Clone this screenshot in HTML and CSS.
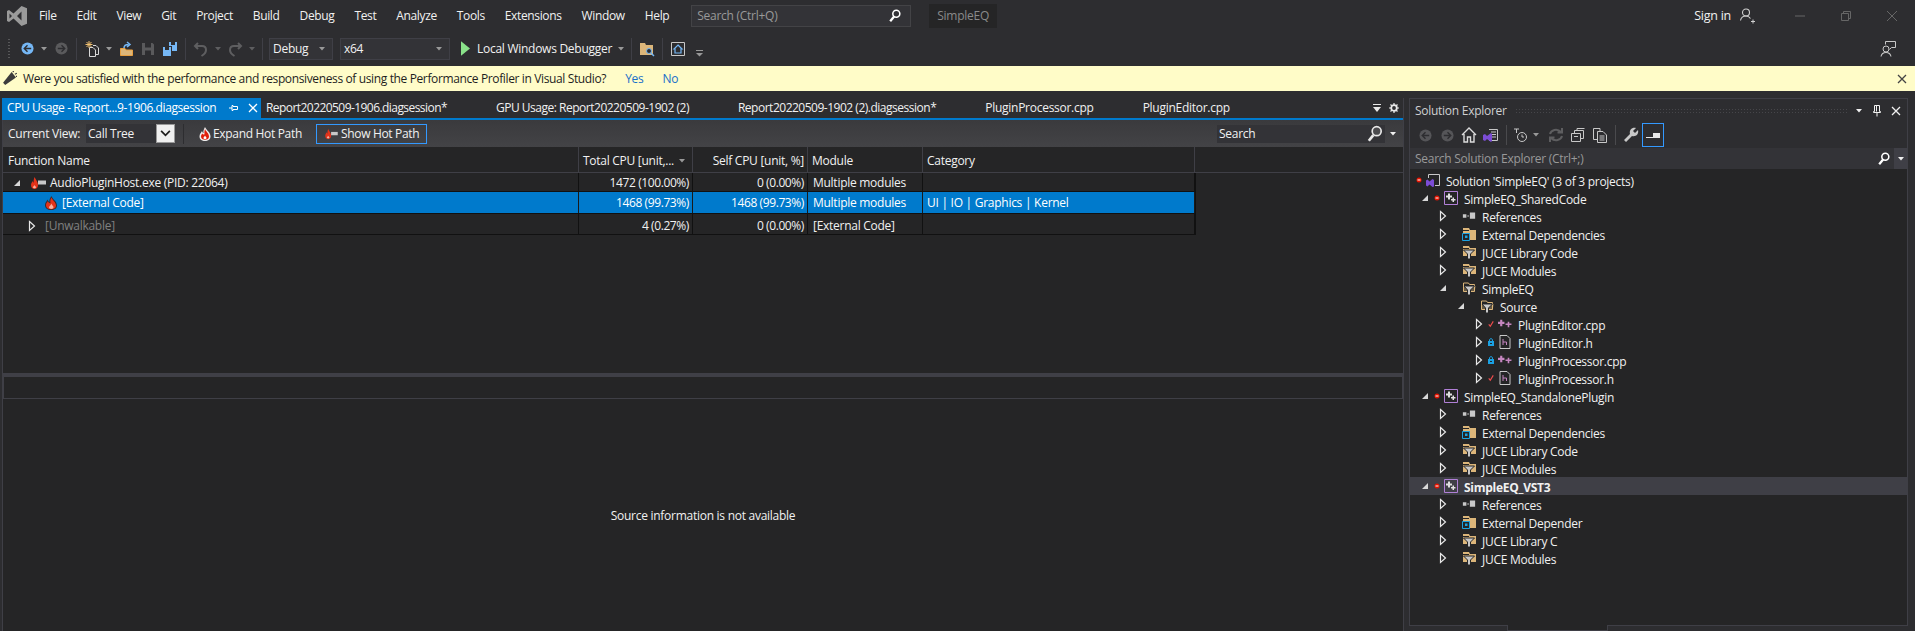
FILE: index.html
```html
<!DOCTYPE html>
<html lang="en">
<head>
<meta charset="utf-8">
<title>SimpleEQ - Visual Studio</title>
<link rel="stylesheet" href="styles.css">
</head>
<body>
<svg class="defs" aria-hidden="true">
  <symbol id="i-tri-open" viewBox="0 0 8 8"><path d="M7 1V7H1Z" fill="#d8d8d8"/></symbol>
  <symbol id="i-tri-closed" viewBox="0 0 8 12"><path d="M1.5 1.5L6.5 6L1.5 10.5Z" fill="none" stroke="#e8e8e8" stroke-width="1.2"/></symbol>
  <symbol id="i-dd" viewBox="0 0 8 4"><path d="M1 0H7L4 3.500Z" fill="currentColor"/></symbol>
  <symbol id="i-ref" viewBox="0 0 16 10"><path d="M1 3H5V7H1ZM9 1H15V8H9ZM6 4.500H8V5.500H6Z" fill="#c8c8c8"/></symbol>
  <symbol id="i-dep" viewBox="0 0 14 14"><path d="M1 1H7L8 3H14V13H1Z" fill="#dcb67a"/><path d="M1 3H7V4H1Z" fill="#252526"/><path d="M0.500 6.500H7.500V13.500H0.500Z" fill="#252526" stroke="#1ba1e2"/><path d="M3 8.500H5.500V11H3ZM4 9.500H4.500V10H4Z" fill="#1ba1e2"/></symbol>
  <symbol id="i-filter" viewBox="0 0 14 14"><path d="M1 1H7L8 3H14V11H1Z" fill="#dcb67a"/><path d="M1 3H7V4H1Z" fill="#252526"/><path d="M1.500 5H12.500L8.500 9V14H5.500V9Z" fill="#c8c8c8" stroke="#252526"/></symbol>
  <symbol id="i-filter-open" viewBox="0 0 14 14"><path d="M1.500 2H6.500L7.500 3.500H12.500V10.500H1.500Z" fill="none" stroke="#dcb67a"/><path d="M1 5H14L12.500 11H2Z" fill="#dcb67a" opacity=".35"/><path d="M2 5H12.500L8.500 9V14H5.500V9Z" fill="#c8c8c8" stroke="#252526"/></symbol>
  <symbol id="i-proj" viewBox="0 0 14 14"><path d="M.5.5H13.500V13.500H.5Z" fill="none" stroke="#b180d7"/><path d="M4 2.500H6V4.500H8V6.500H6V8.500H4V6.500H2V4.500H4ZM8.500 6.500H10V8H11.500V9.500H10V11H8.500V9.500H7V8H8.500Z" fill="#e0e0e0"/></symbol>
  <symbol id="i-cpp" viewBox="0 0 13 8"><path d="M2 0H4V2H6V4H4V6H2V4H0V2H2ZM9 2H10.500V3.500H12.500V5H10.500V7H9V5H7V3.500H9Z" fill="#c586c0"/></symbol>
  <symbol id="i-h" viewBox="0 0 11 14"><path d="M.5.5H7.500L10.500 3.500V13.500H.5Z" fill="none" stroke="#c8c8c8"/><path d="M3.500 4V10M3.500 7H7V10" fill="none" stroke="#c586c0"/></symbol>
  <symbol id="i-check" viewBox="0 0 8 8"><path d="M1 4.500L3 7L7 .5" fill="none" stroke="#f14c4c" stroke-width="1.500"/></symbol>
  <symbol id="i-lock" viewBox="0 0 6 8"><path d="M0 3H6V8H0Z" fill="#1ba1e2"/><path d="M1.500 3V1.500C1.500.5 4.500.5 4.500 1.500V3" fill="none" stroke="#1ba1e2"/><path d="M2 5H4V6H2Z" fill="#252526"/></symbol>
  <symbol id="i-minus" viewBox="0 0 6 6"><circle cx="3" cy="3" r="2.500" fill="#e51400"/><path d="M1.500 2.500H4.500V3.500H1.500Z" fill="#fff"/></symbol>
  <symbol id="i-nav-back" viewBox="0 0 14 14"><circle cx="7" cy="7" r="6.500" fill="currentColor"/><path d="M7 3.500L3.500 7L7 10.500M3.500 7H11" fill="none" stroke="#2d2d30" stroke-width="1.500"/></symbol>
  <symbol id="i-nav-fwd" viewBox="0 0 14 14"><circle cx="7" cy="7" r="6.500" fill="currentColor"/><path d="M7 3.500L10.500 7L7 10.500M10.500 7H3" fill="none" stroke="#2d2d30" stroke-width="1.500"/></symbol>
  <symbol id="i-flame" viewBox="0 0 12 14"><path d="M6.500 0C7 3 12 5 12 9.500C12 12.500 9.500 14 6 14C2.500 14 0 12.500 0 9C0 7 1.500 5.500 2.500 3.500C3 5 3.500 5.500 4.500 6C4 4 5 2 6.500 0Z" fill="#3a2a2a"/><path d="M6.500 1.500C7 4 11 6 11 9.500C11 12 9 13.300 6 13.300C3 13.300 1 12 1 9.200C1 7.500 2 6.500 2.800 5.200C3.300 6.300 4 7 5.500 7.300C5 5 5.500 3 6.500 1.500Z" fill="#e5331a"/><path d="M6.500 7.500C6.500 9 8.500 10 8.500 11.300C8.500 12.500 7.500 13 6.300 13C5 13 4 12.500 4 11.300C4 10 5.800 9.500 6.500 7.500Z" fill="#f6b0a0"/></symbol>
  <symbol id="i-flame-white" viewBox="0 0 12 14"><path d="M6 0C7 3 11.500 5 11.500 9.500C11.500 12.500 9 14 6 14C3 14 .5 12.500 .5 9.500C.5 7 2 6 3 4C3.500 5.500 4 6 4.500 6C4 4 5 2 6 0Z" fill="#eee"/><path d="M6 2C6.800 4.500 10 6 10 9.500C10 11.800 8 12.800 6 12.800C4 12.800 2 11.800 2 9.500C2 8 3 7.300 3.200 6.500C4 7.800 5.500 7.800 5.500 7C5.300 5 5.500 3.500 6 2Z" fill="#e0200c"/><path d="M6 8.500C6.300 9.500 7.500 10 7.500 11C7.500 11.800 6.800 12 6 12C5.200 12 4.500 11.800 4.500 11C4.500 10 5.700 9.500 6 8.500Z" fill="#fff"/></symbol>
  <symbol id="i-hot" viewBox="0 0 15 12"><path d="M3.500 0C4.500 2.500 7 4.500 7 8C7 10.500 5.500 12 3.500 12C1.500 12 0 10.500 0 8C0 6.500 1 5.500 1.500 4C2 5 2.300 5.500 2.700 5.500C2.500 4 2.800 2 3.500 0Z" fill="#e5331a"/><path d="M3.500 8C4 9 5 9.300 5 10.300C5 11 4.300 11.300 3.500 11.300C2.700 11.300 2 11 2 10.300C2 9.300 3 9 3.500 8Z" fill="#f6b0a0"/><path d="M7 3.500H15V7.500H7Z" fill="#c8c8c8"/></symbol>
  <symbol id="i-search" viewBox="0 0 14 16"><circle cx="8.500" cy="5.500" r="4" fill="none" stroke="#fff" stroke-width="1.800"/><path d="M6 8.500L1.500 14" stroke="#fff" stroke-width="2.600"/></symbol>
  <symbol id="i-x" viewBox="0 0 10 10"><path d="M1 1L9 9M9 1L1 9" fill="none" stroke="currentColor" stroke-width="1.300"/></symbol>
</svg>

<div class="app">
  <header class="titlebar">
    <svg class="logo" viewBox="0 0 20 20"><path fill-rule="evenodd" d="M14.500 0L20 2.200V17.800L14.500 20L6.500 12.500L2 16L0 15V5L2 4L6.500 7.500ZM14.500 5.500L10 10L14.500 14.500ZM2.500 7.500V12.500L5 10Z" fill="#9a9a9a"/></svg>
    <nav class="menu">
      <span>File</span><span>Edit</span><span>View</span><span>Git</span><span>Project</span><span>Build</span><span>Debug</span><span>Test</span><span>Analyze</span><span>Tools</span><span>Extensions</span><span>Window</span><span>Help</span>
    </nav>
    <div class="quick"><span>Search (Ctrl+Q)</span><svg class="i14" viewBox="0 0 14 16"><use href="#i-search"/></svg></div>
    <div class="solname">SimpleEQ</div>
    <div class="spacer"></div>
    <span class="signin">Sign in</span>
    <svg class="person" viewBox="0 0 16 16"><circle cx="6" cy="4.500" r="3.500" fill="none" stroke="#d0d0d0" stroke-width="1.100"/><path d="M.5 12.500C1 9.500 3 8 6 8C8 8 9.500 9 10.500 10.500" fill="none" stroke="#d0d0d0" stroke-width="1.100"/><path d="M11 13.500H15M13 11.500V15.500" stroke="#d0d0d0"/></svg>
    <div class="winbtns">
      <svg class="win" viewBox="0 0 12 12"><path d="M1 6H11" stroke="#666" stroke-width="1"/></svg>
      <svg class="win" viewBox="0 0 12 12"><path d="M1.500 3.500H8.500V10.500H1.500ZM3.500 3.500V1.500H10.500V8.500H8.500" fill="none" stroke="#666"/></svg>
      <svg class="win" viewBox="0 0 12 12"><path d="M1 1L11 11M11 1L1 11" stroke="#666"/></svg>
    </div>
  </header>

  <div class="toolbar">
    <span class="grip"></span>
    <span class="btn blue"><svg class="i13"><use href="#i-nav-back"/></svg></span><span class="dd"><svg class="i8"><use href="#i-dd"/></svg></span>
    <span class="btn dim"><svg class="i13"><use href="#i-nav-fwd"/></svg></span>
    <span class="sep"></span>
    <span class="btn"><svg class="i16" viewBox="0 0 16 16"><path d="M5.500 6.500H9L11.500 9V15.500H5.500Z" fill="none" stroke="#d8d8d8"/><path d="M9 4.500H12L14.500 7V13.500H11.500" fill="none" stroke="#d8d8d8"/><path d="M5 0V7M1.500 3.500H8.500M2.500 1L7.500 6M7.500 1L2.500 6" stroke="#f0c070"/></svg></span><span class="dd"><svg class="i8"><use href="#i-dd"/></svg></span>
    <span class="btn"><svg class="i16" viewBox="0 0 16 16"><path d="M2.500 7.500H7L8 9H14.500V14.500H2.500Z" fill="#dcb67a" stroke="#e8a040"/><path d="M6 7C6 4.500 8 3.500 10.500 3.500M9 1L12 3.500L9 6" fill="none" stroke="#75b7f5" stroke-width="1.500"/></svg></span>
    <span class="btn"><svg class="i16" viewBox="0 0 16 16"><path fill-rule="evenodd" d="M2 2H12.500L14 3.500V14H2ZM5 2V6.500H11V2ZM5 9.500V14H11V9.500Z" fill="#5a5a5c"/></svg></span>
    <span class="btn"><svg class="i16" viewBox="0 0 16 16"><path fill-rule="evenodd" d="M1 6H9V15H1ZM3 6V9H7V6Z" fill="#75b7f5"/><path fill-rule="evenodd" d="M7 1H15V10H10V5H7ZM9 1V4H13V1Z" fill="#75b7f5"/></svg></span>
    <span class="sep"></span>
    <span class="btn"><svg class="i16" viewBox="0 0 16 16"><path d="M5 2L2 5L5 8M2.500 5H9C12 5 13 7 13 9C13 11.500 11 13.500 8.500 15" fill="none" stroke="#5e5e60" stroke-width="2"/></svg></span><span class="dd dark"><svg class="i8"><use href="#i-dd"/></svg></span>
    <span class="btn"><svg class="i16" viewBox="0 0 16 16"><path d="M11 2L14 5L11 8M13.500 5H7C4 5 3 7 3 9C3 11.500 5 13.500 7.500 15" fill="none" stroke="#5e5e60" stroke-width="2"/></svg></span><span class="dd dark"><svg class="i8"><use href="#i-dd"/></svg></span>
    <span class="sep"></span>
    <div class="combo debug"><span>Debug</span><svg class="i8"><use href="#i-dd"/></svg></div>
    <div class="combo x64"><span>x64</span><svg class="i8"><use href="#i-dd"/></svg></div>
    <svg class="play" viewBox="0 0 10 16"><path d="M0 0L10 8L0 16Z" fill="#8ae28a"/></svg>
    <span class="runlabel">Local Windows Debugger</span>
    <span class="dd"><svg class="i8"><use href="#i-dd"/></svg></span>
    <span class="sep"></span>
    <span class="btn"><svg class="i16" viewBox="0 0 16 16"><path d="M1 2H6L7 4H14V14H1Z" fill="#dcb67a"/><circle cx="10" cy="10" r="2.500" fill="#2d2d30" stroke="#75b7f5"/><path d="M12 12L15 15" stroke="#75b7f5" stroke-width="1.500"/></svg></span>
    <span class="sep"></span>
    <span class="btn"><svg class="i16" viewBox="0 0 16 16"><path d="M1.500 1.500H14.500V14.500H1.500Z" fill="none" stroke="#c8c8c8"/><path d="M8 4L12 8H11V12H5V8H4Z" fill="none" stroke="#75b7f5" stroke-width="1.200"/></svg></span>
    <svg class="customize" viewBox="0 0 7 7"><path d="M0 .5H7" stroke="#999"/><path d="M0 3H7L3.500 6.500Z" fill="#999"/></svg>
    <div class="spacer"></div>
    <svg class="feedback" viewBox="0 0 16 16"><circle cx="6" cy="8" r="3" fill="none" stroke="#c8c8c8"/><path d="M1 15.500C1.500 13 3 11.500 6 11.500C9 11.500 10.500 13 11 15.500" fill="none" stroke="#c8c8c8" stroke-width="1.100"/><path d="M5.500 3.500V.5H15.500V6.500H11.500L9.500 8.500" fill="none" stroke="#c8c8c8"/></svg>
  </div>

  <div class="infobar">
    <svg class="megaphone" viewBox="0 0 14 14"><path d="M1 11L9 1L13 6L3 13Z" fill="#3c3c3c"/><path d="M10 1L11 0M12 3L14 2M13 5L14 5" stroke="#3c3c3c"/></svg>
    <span class="question">Were you satisfied with the performance and responsiveness of using the Performance Profiler in Visual Studio?</span>
    <a class="link yes">Yes</a>
    <a class="link no">No</a>
    <div class="spacer"></div>
    <svg class="infox" viewBox="0 0 10 10"><use href="#i-x"/></svg>
  </div>

  <main class="workspace">
    <section class="doc">
      <div class="tabs">
        <div class="tab-active">
          <span class="tab-title">CPU Usage - Report...9-1906.diagsession</span>
          <svg class="tabpin" viewBox="0 0 10 8"><path d="M0 4H3M3 1.500V6.500H4V5.500H8.500V2.500H4V1.500Z" fill="none" stroke="#fff"/></svg>
          <svg class="tabx" viewBox="0 0 10 10"><use href="#i-x"/></svg>
        </div>
        <div class="tab-rest">
          <span class="tighter">Report20220509-1906.diagsession*</span>
          <span class="tight">GPU Usage: Report20220509-1902 (2)</span>
          <span class="tight">Report20220509-1902 (2).diagsession*</span>
          <span>PluginProcessor.cpp</span>
          <span>PluginEditor.cpp</span>
        </div>
        <div class="spacer"></div>
        <svg class="tabmenu" viewBox="0 0 8 9"><path d="M0 .5H8" stroke="#e8e8e8"/><path d="M0 3H8L4 8Z" fill="#e8e8e8"/></svg>
        <svg class="gear" viewBox="0 0 10 10"><circle cx="5" cy="5" r="2.800" fill="none" stroke="#e8e8e8" stroke-width="1.800"/><path d="M5 0V2M5 8V10M0 5H2M8 5H10M1.500 1.500L3 3M7 7L8.500 8.500M1.500 8.500L3 7M7 3L8.500 1.500" stroke="#e8e8e8" stroke-width="1.200"/></svg>
      </div>
      <div class="viewbar">
        <span class="viewlabel">Current View:</span>
        <div class="viewcombo"><span>Call Tree</span><span class="viewarrow"><svg viewBox="0 0 12 8"><path d="M1 1L6 6L11 1" fill="none" stroke="#1e1e1e" stroke-width="2"/></svg></span></div>
        <span class="viewsep"></span>
        <span class="hotbtn"><svg class="flame-sm"><use href="#i-flame-white"/></svg>Expand Hot Path</span>
        <span class="hotbtn outlined"><svg class="hot-sm"><use href="#i-hot"/></svg>Show Hot Path</span>
        <div class="spacer"></div>
        <div class="viewsearch"><span>Search</span><svg class="lens" viewBox="0 0 14 16"><circle cx="8.500" cy="5.500" r="4" fill="#4a4a4d" stroke="#e8e8e8" stroke-width="1.500"/><path d="M5.500 9L1.500 14" stroke="#e8e8e8" stroke-width="2.400"/></svg></div>
        <svg class="i8 white"><use href="#i-dd"/></svg>
      </div>
      <div class="thead">
        <span class="cell">Function Name</span>
        <span class="cell sorted">Total CPU [unit,...<svg class="i8"><use href="#i-dd"/></svg></span>
        <span class="cell num">Self CPU [unit, %]</span>
        <span class="cell">Module</span>
        <span class="cell">Category</span>
        <span class="cell"></span>
      </div>
      <div class="tbody">
        <div class="trow">
          <span class="cell name n0"><svg class="tri"><use href="#i-tri-open"/></svg><svg class="hot"><use href="#i-hot"/></svg>AudioPluginHost.exe (PID: 22064)</span>
          <span class="cell num">1472 (100.00%)</span>
          <span class="cell num">0 (0.00%)</span>
          <span class="cell">Multiple modules</span>
          <span class="cell"></span>
        </div>
        <div class="trow selected">
          <span class="cell name n1"><svg class="flame"><use href="#i-flame"/></svg>[External Code]</span>
          <span class="cell num">1468 (99.73%)</span>
          <span class="cell num">1468 (99.73%)</span>
          <span class="cell">Multiple modules</span>
          <span class="cell">UI | IO | Graphics | Kernel</span>
        </div>
        <div class="trow last">
          <span class="cell name n2 muted"><svg class="tri2"><use href="#i-tri-closed"/></svg>[Unwalkable]</span>
          <span class="cell num">4 (0.27%)</span>
          <span class="cell num">0 (0.00%)</span>
          <span class="cell">[External Code]</span>
          <span class="cell"></span>
        </div>
      </div>
      <div class="splitter"></div>
      <div class="srcbar"></div>
      <div class="srcmsg">Source information is not available</div>
    </section>

    <aside class="side">
      <div class="sidepanel">
        <div class="sidetitle">
          <span>Solution Explorer</span>
          <span class="dots"></span>
          <svg class="i8 white"><use href="#i-dd"/></svg>
          <svg class="sidepin" viewBox="0 0 8 12"><path d="M1.500.5H6.500V6.500H7.500V7.500H.5V6.500H1.500ZM4 7.500V11.500M3.500 1V6.500" fill="none" stroke="#f0f0f0"/></svg>
          <svg class="sidex" viewBox="0 0 10 10"><use href="#i-x"/></svg>
        </div>
        <div class="sidetools">
          <span class="sbtn grey"><svg class="i13"><use href="#i-nav-back"/></svg></span>
          <span class="sbtn grey"><svg class="i13"><use href="#i-nav-fwd"/></svg></span>
          <span class="sbtn"><svg class="i16" viewBox="0 0 16 16"><path d="M1 8L8 1L15 8M3 7V15H6.500V10H9.500V15H13V7" fill="none" stroke="#dcdcdc" stroke-width="1.400"/></svg></span>
          <span class="sbtn"><svg class="i16" viewBox="0 0 16 16"><path d="M6 2.500H14.500V13.500H6" fill="none" stroke="#c8c8c8"/><path d="M8 5H13M8 7.500H13M8 10H13" stroke="#c8c8c8"/><path d="M0 8L2 7L4 9L8 6L9 7V14L8 15L4 12L2 14L0 13Z" fill="#7c4dd6"/></svg></span>
          <span class="ssep"></span>
          <span class="sbtn wide"><svg class="i16" viewBox="0 0 16 16"><circle cx="9" cy="10" r="4.500" fill="none" stroke="#c8c8c8"/><path d="M9 7.500V10H11M1 2H6M3.500 2V6" fill="none" stroke="#c8c8c8"/></svg><svg class="i8"><use href="#i-dd"/></svg></span>
          <span class="sbtn"><svg class="i16" viewBox="0 0 16 16"><path d="M2 7C3 3 9 1 13 5M14 1V5.500H9.500M14 9C13 13 7 15 3 11M2 15V10.500H6.500" fill="none" stroke="#5e5e60" stroke-width="2"/></svg></span>
          <span class="sbtn"><svg class="i14" viewBox="0 0 14 14"><path d="M.5 5.500H9.500V13.500H.5ZM3 8.500H7M3.500 5V2.500H12.500V10.500H10M6 2V.5H13.500" fill="none" stroke="#c8c8c8"/></svg></span>
          <span class="sbtn"><svg class="i16" viewBox="0 0 16 16"><path d="M5.500 4.500H11L14.500 8V15.500H5.500ZM7.500 9H12.500M7.500 11H12.500M7.500 13H12.500M5 12.500H1.500V1.500H8V4" fill="none" stroke="#c8c8c8"/></svg></span>
          <span class="ssep"></span>
          <span class="sbtn"><svg class="i16" viewBox="0 0 16 16"><path d="M1 13L7 7C6 3 9 0 13 1L10 4L12 6L15 3C16 7 13 10 9 9L3 15Z" fill="#c8c8c8"/></svg></span>
          <span class="sbtn active"><svg class="pinprev" viewBox="0 0 14 5"><path d="M0 4H14V5H0ZM7 0H14V4H7Z" fill="#e8e8e8"/></svg></span>
        </div>
        <div class="sidesearch"><span>Search Solution Explorer (Ctrl+;)</span><div class="spacer"></div><svg class="i14" viewBox="0 0 14 16"><use href="#i-search"/></svg><span class="ssdrop"><svg class="i8 white"><use href="#i-dd"/></svg></span></div>
        <div class="tree">
          <div class="row l0"><svg class="st"><use href="#i-minus"/></svg><svg class="ic" viewBox="0 0 14 14"><path d="M2.500 1.500H13.500V12.500H9M2.500 5V1.500" fill="none" stroke="#c8c8c8"/><path d="M0 7.500L1.500 6.500L3.500 8.500L6.500 6L8 7V13.500L6.500 14L3.500 11.500L1.500 13.500L0 12.500Z" fill="#7c4dd6"/></svg><span>Solution 'SimpleEQ' (3 of 3 projects)</span></div>
          <div class="row l1"><svg class="ex open"><use href="#i-tri-open"/></svg><svg class="st"><use href="#i-minus"/></svg><svg class="ic"><use href="#i-proj"/></svg><span>SimpleEQ_SharedCode</span></div>
          <div class="row l2"><svg class="ex"><use href="#i-tri-closed"/></svg><span class="st"></span><svg class="ic"><use href="#i-ref"/></svg><span>References</span></div>
          <div class="row l2"><svg class="ex"><use href="#i-tri-closed"/></svg><span class="st"></span><svg class="ic"><use href="#i-dep"/></svg><span>External Dependencies</span></div>
          <div class="row l2"><svg class="ex"><use href="#i-tri-closed"/></svg><span class="st"></span><svg class="ic"><use href="#i-filter"/></svg><span>JUCE Library Code</span></div>
          <div class="row l2"><svg class="ex"><use href="#i-tri-closed"/></svg><span class="st"></span><svg class="ic"><use href="#i-filter"/></svg><span>JUCE Modules</span></div>
          <div class="row l2"><svg class="ex open"><use href="#i-tri-open"/></svg><span class="st"></span><svg class="ic"><use href="#i-filter-open"/></svg><span>SimpleEQ</span></div>
          <div class="row l3"><svg class="ex open"><use href="#i-tri-open"/></svg><span class="st"></span><svg class="ic"><use href="#i-filter-open"/></svg><span>Source</span></div>
          <div class="row l4"><svg class="ex"><use href="#i-tri-closed"/></svg><svg class="st"><use href="#i-check"/></svg><svg class="ic"><use href="#i-cpp"/></svg><span>PluginEditor.cpp</span></div>
          <div class="row l4"><svg class="ex"><use href="#i-tri-closed"/></svg><svg class="st"><use href="#i-lock"/></svg><svg class="ic"><use href="#i-h"/></svg><span>PluginEditor.h</span></div>
          <div class="row l4"><svg class="ex"><use href="#i-tri-closed"/></svg><svg class="st"><use href="#i-lock"/></svg><svg class="ic"><use href="#i-cpp"/></svg><span>PluginProcessor.cpp</span></div>
          <div class="row l4"><svg class="ex"><use href="#i-tri-closed"/></svg><svg class="st"><use href="#i-check"/></svg><svg class="ic"><use href="#i-h"/></svg><span>PluginProcessor.h</span></div>
          <div class="row l1"><svg class="ex open"><use href="#i-tri-open"/></svg><svg class="st"><use href="#i-minus"/></svg><svg class="ic"><use href="#i-proj"/></svg><span>SimpleEQ_StandalonePlugin</span></div>
          <div class="row l2"><svg class="ex"><use href="#i-tri-closed"/></svg><span class="st"></span><svg class="ic"><use href="#i-ref"/></svg><span>References</span></div>
          <div class="row l2"><svg class="ex"><use href="#i-tri-closed"/></svg><span class="st"></span><svg class="ic"><use href="#i-dep"/></svg><span>External Dependencies</span></div>
          <div class="row l2"><svg class="ex"><use href="#i-tri-closed"/></svg><span class="st"></span><svg class="ic"><use href="#i-filter"/></svg><span>JUCE Library Code</span></div>
          <div class="row l2"><svg class="ex"><use href="#i-tri-closed"/></svg><span class="st"></span><svg class="ic"><use href="#i-filter"/></svg><span>JUCE Modules</span></div>
          <div class="row l1 current"><svg class="ex open"><use href="#i-tri-open"/></svg><svg class="st"><use href="#i-minus"/></svg><svg class="ic"><use href="#i-proj"/></svg><span>SimpleEQ_VST3</span></div>
          <div class="row l2"><svg class="ex"><use href="#i-tri-closed"/></svg><span class="st"></span><svg class="ic"><use href="#i-ref"/></svg><span>References</span></div>
          <div class="row l2"><svg class="ex"><use href="#i-tri-closed"/></svg><span class="st"></span><svg class="ic"><use href="#i-dep"/></svg><span>External Depender</span></div>
          <div class="row l2"><svg class="ex"><use href="#i-tri-closed"/></svg><span class="st"></span><svg class="ic"><use href="#i-filter"/></svg><span>JUCE Library C</span></div>
          <div class="row l2"><svg class="ex"><use href="#i-tri-closed"/></svg><span class="st"></span><svg class="ic"><use href="#i-filter"/></svg><span>JUCE Modules</span></div>
        </div>
      </div>
      <div class="sidebottom"><span class="sidebottom-tab"></span></div>
    </aside>
  </main>
</div>
</body>
</html>
```

FILE: styles.css
```css
* { box-sizing: border-box; }
html, body { margin: 0; height: 100%; overflow: hidden; }
body {
  background: #2d2d30;
  color: #f1f1f1;
  font: 12px/16px "Open Sans", "Noto Sans", sans-serif;
  letter-spacing: -0.27px;
}
.defs { position: absolute; width: 0; height: 0; }
svg { display: block; flex: none; }
.spacer { flex: 1; }
.i8 { width: 8px; height: 4px; color: #999; }
.i8.white { color: #f0f0f0; }
.i13 { width: 13px; height: 13px; }
.i14 { width: 14px; height: 14px; }
.i16 { width: 16px; height: 16px; }

.app { display: flex; flex-direction: column; width: 1915px; height: 631px; }

/* title bar */
.titlebar { display: flex; align-items: center; height: 32px; flex: none; }
.logo { width: 20px; height: 20px; margin-left: 7px; }
.menu { display: flex; margin-left: 2px; letter-spacing: -0.36px; }
.menu span { padding: 0 10px; }
.quick {
  display: flex; align-items: center; justify-content: space-between;
  width: 220px; height: 22px; margin-left: 12px; padding: 0 8px 0 5px;
  background: #333337; border: 1px solid #434346; color: #999;
}
.solname { display: flex; align-items: center; height: 24px; margin-left: 18px; padding: 0 8px; background: #252526; color: #8a8a8a; }
.signin { margin-right: 9px; font-size: 12.5px; letter-spacing: -0.25px; }
.person { width: 16px; height: 16px; margin-right: 38px; }
.winbtns { display: flex; gap: 34px; margin-right: 17px; }
.win { width: 12px; height: 12px; }

/* main toolbar */
.toolbar { display: flex; align-items: center; height: 33px; flex: none; padding-left: 6px; }
.grip {
  width: 10px; height: 22px;
  background-image: radial-gradient(#58585a 0.6px, transparent 0.8px);
  background-size: 2px 3px; background-position: 2px 0; background-repeat: repeat;
  clip-path: inset(0 6px 0 2px);
}
.btn { display: flex; align-items: center; justify-content: center; width: 22px; height: 22px; color: #ccc; }
.btn.blue { color: #75b7f5; }
.btn.dim { color: #5a5a5c; }
.dd { display: flex; align-items: center; justify-content: center; width: 12px; height: 22px; }
.dd.dark .i8 { color: #5e5e60; }
.sep { width: 9px; height: 22px; background: linear-gradient(#3f3f46, #3f3f46) center / 1px 100% no-repeat; }
.combo {
  display: flex; align-items: center; justify-content: space-between;
  height: 22px; padding: 0 6px 0 3px; background: #333337; border: 1px solid #3f3f46;
}
.combo.debug { width: 64px; margin-left: 2px; }
.combo.x64 { width: 110px; margin-left: 7px; }
.play { width: 9px; height: 15px; margin-left: 11px; }
.runlabel { margin-left: 7px; margin-right: 3px; }
.customize { width: 7px; height: 7px; margin: 10px 0 0 7px; }
.feedback { width: 16px; height: 16px; margin-right: 19px; }

/* info bar */
.infobar {
  display: flex; align-items: center; height: 25px; flex: none; margin-top: 1px;
  background: #fffcc8; color: #1e1e1e; padding-left: 2px;
}
.megaphone { width: 15px; height: 15px; margin-right: 6px; }
.question { flex: none; margin-right: 19px; letter-spacing: -0.37px; }
.link { color: #1a6fc9; }
.link.yes { margin-right: 19px; }
.infox { width: 10px; height: 10px; margin-right: 8px; color: #444; }

/* workspace */
.workspace { display: flex; flex: 1; min-height: 0; padding-top: 7px; background: #2d2d30; }
.doc {
  display: flex; flex-direction: column; flex: none; width: 1402px; margin-left: 2px;
  border-left: 1px solid #3f3f46; border-right: 1px solid #3f3f46; background: #252526;
}
.tabs {
  display: flex; align-items: center; height: 22px; flex: none; margin-left: -1px;
  background: #2d2d30; border-bottom: 2px solid #007acc;
}
.tab-active {
  display: flex; align-items: center; width: 259px; height: 20px; padding-left: 5px;
  background: #007acc; color: #fff;
}
.tab-title { flex: none; letter-spacing: -0.4px; }
.tabpin { width: 10px; height: 8px; margin-left: 13px; }
.tabx { width: 10px; height: 10px; margin-left: 9px; color: #fff; }
.tab-rest { display: flex; gap: 49px; padding-left: 5px; }
.tight { letter-spacing: -0.49px; }
.tighter { letter-spacing: -0.56px; }
.tabmenu { width: 8px; height: 9px; margin-right: 8px; }
.gear { width: 10px; height: 10px; margin-right: 4px; }

.viewbar {
  display: flex; align-items: center; height: 27px; flex: none; padding-left: 5px;
  background: linear-gradient(#3a3a3d, #434346);
}
.viewlabel { width: 78px; flex: none; }
.viewcombo { display: flex; align-items: center; justify-content: space-between; width: 89px; height: 19px; padding-left: 2px; background: #333337; }
.viewarrow { display: flex; align-items: center; justify-content: center; width: 19px; height: 19px; background: #f0f0f0; border: 1px solid #999; }
.viewarrow svg { width: 11px; height: 7px; }
.viewsep { width: 1px; height: 20px; margin: 0 8px; background: #2d2d30; }
.hotbtn { display: flex; align-items: center; height: 20px; padding: 0 7px; white-space: nowrap; letter-spacing: -0.32px; }
.hotbtn.outlined { margin-left: 7px; border: 1px solid #3399ff; padding: 0 0 0 8px; width: 111px; }
.flame-sm { width: 12px; height: 14px; margin-right: 2px; }
.hot-sm { width: 13px; height: 10px; margin-right: 3px; }
.viewsearch {
  display: flex; align-items: center; justify-content: space-between;
  width: 168px; height: 18px; padding: 0 2px; background: #333337; margin-right: 4px;
}
.lens { width: 16px; height: 18px; }
.viewbar > .i8 { margin-right: 6px; }

.thead, .trow { display: grid; grid-template-columns: 576px 114px 115px 115px 272px; }
.thead { grid-template-columns: 576px 114px 115px 115px 272px 1fr; height: 26px; flex: none; background: #252526; border-bottom: 1px solid #3f3f46; align-items: stretch; }
.cell { display: flex; align-items: center; padding: 0 4px; border-right: 1px solid #3f3f46; min-width: 0; white-space: nowrap; overflow: hidden; }
.thead .cell { padding-top: 2px; }
.thead .cell:first-child { padding-left: 5px; }
.thead .cell:last-child { border-right: 0; }
.cell.sorted { justify-content: space-between; padding-right: 6px; }
.cell.num { justify-content: flex-end; padding-right: 3px; }
.trow .cell.num { letter-spacing: -0.4px; }
.trow .cell:nth-child(4) { padding-left: 5px; }
.tbody { display: flex; flex-direction: column; flex: none; width: 1192px; height: 200px; }
.trow { height: 21px; flex: none; border-bottom: 1px solid #111; border-right: 1px solid #111; width: 1193px; }
.trow:first-child { height: 19px; }
.trow.selected { background: #007acc; color: #fff; height: 22px; }
.trow .cell { border-right-color: #111; padding-top: 1px; }
.trow.last .cell { padding-top: 3px; }
.trow.selected .cell { border-right-color: #1a1a1a; }
.name.n0 { padding-left: 10px; }
.name.n1 { padding-left: 42px; }
.name.n2 { padding-left: 25px; }
.muted { color: #808080; }
.trow .cell.muted { color: #808080; }
.tri { width: 8px; height: 8px; margin-right: 10px; }
.hot { width: 15px; height: 12px; margin-right: 4px; }
.flame { width: 12px; height: 14px; margin-right: 5px; }
.tri2 { width: 8px; height: 12px; margin-right: 9px; }
.splitter { height: 4px; flex: none; background: #3f3f46; }
.srcbar { height: 22px; flex: none; border: 1px solid #3f3f46; border-top: 0; background: #252526; }
.srcmsg { flex: 1; display: flex; align-items: center; justify-content: center; padding-top: 2px; }

/* solution explorer */
.side { display: flex; flex-direction: column; flex: none; width: 499px; margin-left: 5px; }
.sidepanel { display: flex; flex-direction: column; flex: none; height: 528px; border: 1px solid #3f3f46; background: #252526; overflow: hidden; }
.sidetitle { display: flex; align-items: center; height: 23px; flex: none; padding-left: 5px; background: #2d2d30; color: #d0d0d0; }
.dots {
  flex: 1; height: 5px; margin: 0 8px;
  background-image: radial-gradient(#46464a 0.7px, transparent 0.8px);
  background-size: 3px 3px;
}
.sidepin { width: 8px; height: 12px; margin-left: 10px; }
.sidex { width: 10px; height: 10px; margin: 0 6px 0 10px; color: #f0f0f0; }
.sidetools { display: flex; align-items: center; height: 26px; flex: none; padding-left: 4px; background: #2d2d30; }
.sbtn { display: flex; align-items: center; justify-content: center; width: 22px; height: 24px; color: #555558; }
.sbtn.wide { width: 34px; gap: 3px; padding-left: 2px; justify-content: flex-start; }
.sbtn.wide .i8 { color: #999; }
.sbtn.active { border: 1px solid #3399ff; }
.pinprev { width: 14px; height: 5px; }
.ssep { width: 1px; height: 20px; margin: 0 4px; background: #4a4a4d; flex: none; }
.sidesearch { display: flex; align-items: center; height: 21px; flex: none; padding-left: 5px; background: #333337; color: #999; }
.ssdrop { display: flex; align-items: center; justify-content: center; width: 13px; height: 21px; margin-left: 3px; background: #3f3f46; }
.tree { flex: 1; padding-top: 2px; }
.row { display: flex; align-items: center; height: 18px; }
.row > span:last-child { margin-left: 4px; padding-top: 3px; line-height: 15px; }
.l0 { padding-left: 5px; }
.l1 { padding-left: 11px; }
.l2 { padding-left: 29px; }
.l3 { padding-left: 47px; }
.l4 { padding-left: 65px; }
.ex { width: 8px; height: 12px; margin-right: 4px; }
.ex.open { width: 8px; height: 8px; }
.st { width: 6px; height: 8px; margin: 0 4px 0 1px; flex: none; }
.ic { width: 14px; height: 14px; margin-right: 2px; }
.current { background: #3f3f46; font-weight: 700; }
.sidebottom { flex: 1; display: flex; padding-left: 98px; }
.sidebottom-tab { width: 101px; height: 6px; background: #252526; border: 1px solid #3f3f46; border-top: 0; margin-top: -1px; }
```
